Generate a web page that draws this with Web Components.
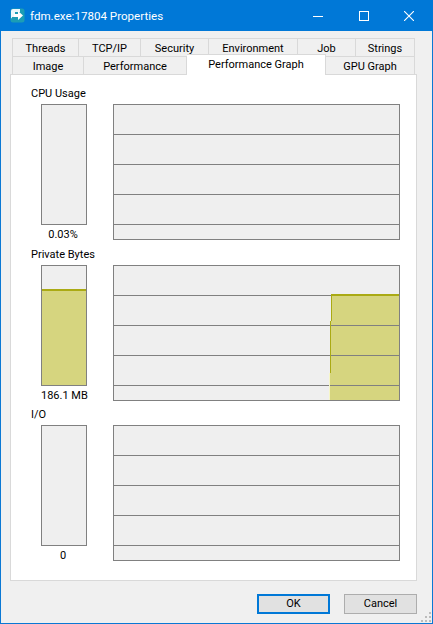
<!DOCTYPE html>
<html>
<head>
<meta charset="utf-8">
<title>fdm.exe:17804 Properties</title>
<style>
  html, body { margin: 0; padding: 0; height: 100%; }
  body { font-family: Roboto, sans-serif; font-size: 11px; color: #000; overflow: hidden; }
</style>
</head>
<body>
<template id="window-tpl">
  <style>
    :host { position: relative; display: flex; flex-direction: column; width: 433px; height: 624px; box-sizing: border-box; background: #f0f0f0; border: 1px solid #0a78d4; border-top: 0; }
    .titlebar { display: flex; align-items: center; height: 31px; margin: 0 -1px; padding: 0 1px 0 10px; background: #0078d7; color: #fff; font-size: 11.6px; flex: none; }
    .icon { width: 15px; height: 15px; margin-right: 5px; flex: none; }
    .title { flex: 1; }
    .ctl { width: 46px; height: 31px; display: flex; align-items: center; justify-content: center; flex: none; }
    .ctl.mid { width: 45px; }
    .ctl svg { display: block; }
    .body { flex: 1; display: flex; flex-direction: column; padding: 7px 15px 0 9px; min-height: 0; }
    .footer { display: flex; justify-content: flex-end; gap: 14px; padding: 13px 0 0; }
    .grip { position: absolute; right: 1px; bottom: 1px; display: block; }
  </style>
  <div class="titlebar">
    <svg class="icon" viewBox="0 0 15 15">
      <rect x="0.5" y="0.5" width="14" height="14" rx="2.5" fill="#1b9db5"/>
      <path d="M1 3a2 2 0 0 1 2-2h7v3H5v5H2v1.5A1.5 1.5 0 0 1 1 9z" fill="#eaf7fb"/>
      <path d="M4 6h4V3l5 4.5-5 4.5V9H4z" fill="#fff"/>
    </svg>
    <span class="title"><slot name="title"></slot></span>
    <div class="ctl"><svg width="10" height="10"><path d="M0 5.5h10" stroke="#fff"/></svg></div>
    <div class="ctl mid"><svg width="10" height="10"><rect x=".5" y=".5" width="9" height="9" fill="none" stroke="#fff"/></svg></div>
    <div class="ctl"><svg width="10" height="10"><path d="M0 0l10 10M10 0L0 10" stroke="#fff" stroke-width="1.1"/></svg></div>
  </div>
  <div class="body">
    <slot name="tabs"></slot>
    <slot name="panel"></slot>
    <div class="footer"><slot name="buttons"></slot></div>
  </div>
  <svg class="grip" width="10" height="10" fill="#bcbcbc">
    <rect x="8" y="0" width="2" height="2"/>
    <rect x="4" y="4" width="2" height="2"/><rect x="8" y="4" width="2" height="2"/>
    <rect x="0" y="8" width="2" height="2"/><rect x="4" y="8" width="2" height="2"/><rect x="8" y="8" width="2" height="2"/>
  </svg>
</template>

<template id="tabs-tpl">
  <style>
    :host { display: block; flex: none; padding-left: 2px; }
    .row { display: flex; height: 18px; }
    ::slotted(*) { flex: none; }
  </style>
  <div class="row"><slot name="back"></slot></div>
  <div class="row"><slot name="front"></slot></div>
</template>

<template id="tab-tpl">
  <style>
    :host { display: block; box-sizing: border-box; height: 18px; background: #f0f0f0; border: 1px solid #d9d9d9; border-bottom: 0; border-left-width: 0; text-align: center; line-height: 20px; font-size: 11px; color: #000; white-space: nowrap; }
    :host([first]) { border-left-width: 1px; }
    :host([active]) { position: relative; z-index: 1; height: 21px; margin-top: -2px; background: #fff; line-height: 19px; }
  </style>
  <slot></slot>
</template>

<template id="panel-tpl">
  <style>
    :host { display: block; box-sizing: border-box; height: 507px; margin-top: 0; flex: none; background: #fff; border: 1px solid #d9d9d9; padding: 9px 16px 0 20px; }
  </style>
  <slot></slot>
</template>

<template id="graph-tpl">
  <style>
    :host { display: block; height: 160px; }
    :host(:first-child) { height: 161px; }
    .label { height: 20px; line-height: 20px; font-size: 11px; white-space: nowrap; }
    .cols { display: flex; gap: 26px; margin-left: 10px; }
    .side { width: 46px; flex: none; }
    .meter { box-sizing: border-box; height: 121px; background: #efefef; border: 1px solid #808080; display: flex; flex-direction: column; justify-content: flex-end; }
    .level { background: #d6d57f; border-top: 2px solid #aaaa14; box-sizing: border-box; }
    .value { text-align: center; line-height: 19px; height: 19px; padding-right: 2px; font-size: 11px; white-space: nowrap; }
    .chart { position: relative; box-sizing: border-box; width: 287px; height: 136px; background: #efefef; border: 1px solid #808080; }
    .chart svg { position: absolute; left: 0; top: 0; display: block; }
    .cell { box-sizing: border-box; height: 30px; border-bottom: 1px solid #808080; }
  </style>
  <div class="label"></div>
  <div class="cols">
    <div class="side">
      <div class="meter"></div>
      <div class="value"></div>
    </div>
    <div class="chart">
      <div class="cell"></div><div class="cell"></div><div class="cell"></div><div class="cell"></div>
    </div>
  </div>
</template>

<template id="button-tpl">
  <style>
    :host { display: block; box-sizing: border-box; width: 73px; height: 20px; background: #e1e1e1; border: 1px solid #adadad; text-align: center; line-height: 18px; font-size: 11px; }
    :host([default]) { border: 2px solid #0078d7; line-height: 16px; }
  </style>
  <slot></slot>
</template>

<script>
  function stamp(el, id) {
    const root = el.attachShadow({ mode: "open" });
    root.appendChild(document.getElementById(id).content.cloneNode(true));
    return root;
  }

  class PropsWindow extends HTMLElement {
    constructor() { super(); stamp(this, "window-tpl"); }
  }
  class TabStrip extends HTMLElement {
    constructor() { super(); stamp(this, "tabs-tpl"); }
  }
  class TabItem extends HTMLElement {
    constructor() { super(); stamp(this, "tab-tpl"); }
    connectedCallback() { this.style.width = this.getAttribute("w") + "px"; }
  }
  class TabPanel extends HTMLElement {
    constructor() { super(); stamp(this, "panel-tpl"); }
  }
  class PerfGraph extends HTMLElement {
    constructor() { super(); stamp(this, "graph-tpl"); }
    connectedCallback() {
      const root = this.shadowRoot;
      root.querySelector(".label").textContent = this.getAttribute("label");
      root.querySelector(".value").textContent = this.getAttribute("value");
      const level = this.getAttribute("level");
      if (level) {
        const bar = document.createElement("div");
        bar.className = "level";
        bar.style.height = level + "px";
        root.querySelector(".meter").appendChild(bar);
      }
      if (this.hasAttribute("history")) {
        // the filled area sits over the grid, so its part of the grid is redrawn here
        root.querySelector(".chart").insertAdjacentHTML("beforeend", `
          <svg width="285" height="134" viewBox="0 0 285 134">
            <path d="M217 29H285V134H216V55H217Z" fill="#d6d57f"/>
            <path d="M216 59.5H285M216 89.5H285M216 119.5H285" stroke="#808080" fill="none"/>
            <path d="M217 29H285" stroke="#aaaa14" stroke-width="2" fill="none"/>
            <path d="M217.5 28V55M216.5 55V107" stroke="#aaaa14" fill="none"/>
            <path d="M215.5 107V134" stroke="#f6f6c8" fill="none"/>
          </svg>`);
      }
    }
  }
  class DialogButton extends HTMLElement {
    constructor() { super(); stamp(this, "button-tpl"); }
  }

  customElements.define("props-window", PropsWindow);
  customElements.define("tab-strip", TabStrip);
  customElements.define("tab-item", TabItem);
  customElements.define("tab-panel", TabPanel);
  customElements.define("perf-graph", PerfGraph);
  customElements.define("dialog-button", DialogButton);
</script>

<props-window>
  <span slot="title">fdm.exe:17804 Properties</span>
  <tab-strip slot="tabs">
    <tab-item slot="back" first w="67">Threads</tab-item>
    <tab-item slot="back" w="62">TCP/IP</tab-item>
    <tab-item slot="back" w="68">Security</tab-item>
    <tab-item slot="back" w="89">Environment</tab-item>
    <tab-item slot="back" w="58">Job</tab-item>
    <tab-item slot="back" w="59">Strings</tab-item>
    <tab-item slot="front" first w="72">Image</tab-item>
    <tab-item slot="front" w="103">Performance</tab-item>
    <tab-item slot="front" active w="139">Performance Graph</tab-item>
    <tab-item slot="front" w="89">GPU Graph</tab-item>
  </tab-strip>
  <tab-panel slot="panel">
    <perf-graph label="CPU Usage" value="0.03%"></perf-graph>
    <perf-graph label="Private Bytes" value="186.1 MB" level="96" history></perf-graph>
    <perf-graph label="I/O" value="0"></perf-graph>
  </tab-panel>
  <dialog-button slot="buttons" default>OK</dialog-button>
  <dialog-button slot="buttons">Cancel</dialog-button>
</props-window>
</body>
</html>
